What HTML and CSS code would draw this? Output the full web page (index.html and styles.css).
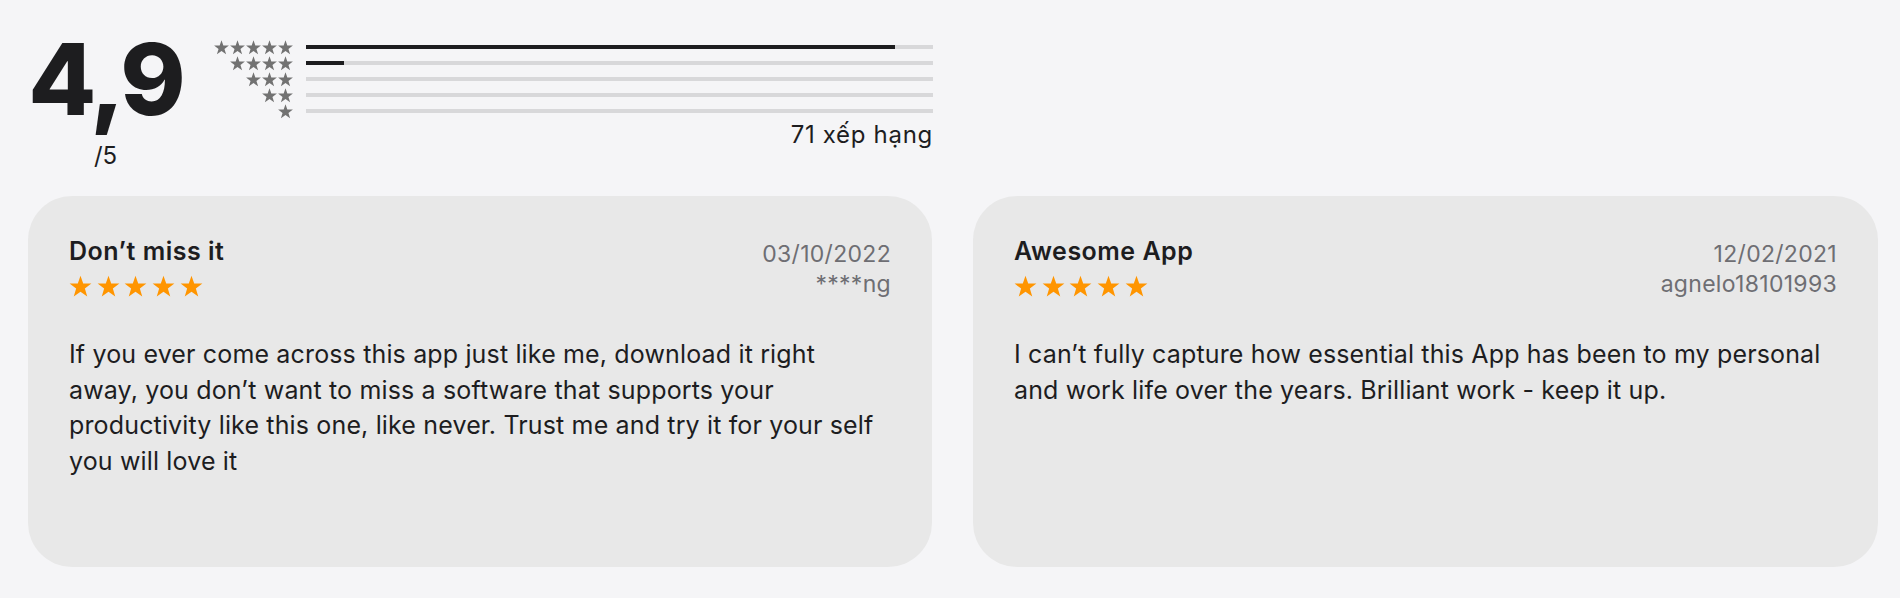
FILE: index.html
```html
<!DOCTYPE html>
<html lang="vi">
<head>
  <meta charset="UTF-8">
  <title>Xếp hạng và đánh giá</title>
  <link rel="stylesheet" href="styles.css">
</head>
<body>
  <svg width="0" height="0" class="defs">
    <symbol id="star" viewBox="0 0 24 24">
      <path d="M12 1.6L14.59 9.04L22.46 9.2L16.18 13.96L18.47 21.5L12 17L5.53 21.5L7.82 13.96L1.54 9.2L9.41 9.04Z"/>
    </symbol>
  </svg>

  <main class="ratings">
    <section class="summary">
      <div class="score">
        <span class="score-value">4,9</span>
        <span class="score-max">/5</span>
      </div>

      <div class="histogram">
        <div class="hist-row">
          <div class="hist-stars">
            <svg><use href="#star"/></svg><svg><use href="#star"/></svg><svg><use href="#star"/></svg><svg><use href="#star"/></svg><svg><use href="#star"/></svg>
          </div>
          <div class="bar"><div class="bar-fill" style="width: 94%"></div></div>
        </div>
        <div class="hist-row">
          <div class="hist-stars">
            <svg><use href="#star"/></svg><svg><use href="#star"/></svg><svg><use href="#star"/></svg><svg><use href="#star"/></svg>
          </div>
          <div class="bar"><div class="bar-fill" style="width: 6%"></div></div>
        </div>
        <div class="hist-row">
          <div class="hist-stars">
            <svg><use href="#star"/></svg><svg><use href="#star"/></svg><svg><use href="#star"/></svg>
          </div>
          <div class="bar"></div>
        </div>
        <div class="hist-row">
          <div class="hist-stars">
            <svg><use href="#star"/></svg><svg><use href="#star"/></svg>
          </div>
          <div class="bar"></div>
        </div>
        <div class="hist-row">
          <div class="hist-stars">
            <svg><use href="#star"/></svg>
          </div>
          <div class="bar"></div>
        </div>
        <div class="count">71 xếp hạng</div>
      </div>
    </section>

    <section class="reviews">
      <article class="review">
        <div class="review-head">
          <div>
            <h3 class="review-title">Don’t miss it</h3>
            <div class="review-stars">
              <svg><use href="#star"/></svg><svg><use href="#star"/></svg><svg><use href="#star"/></svg><svg><use href="#star"/></svg><svg><use href="#star"/></svg>
            </div>
          </div>
          <div class="review-meta">
            <time>03/10/2022</time>
            <span>****ng</span>
          </div>
        </div>
        <p class="review-body">If you ever come across this app just like me, download it right away, you don’t want to miss a software that supports your productivity like this one, like never. Trust me and try it for your self you will love it</p>
      </article>

      <article class="review">
        <div class="review-head">
          <div>
            <h3 class="review-title">Awesome App</h3>
            <div class="review-stars">
              <svg><use href="#star"/></svg><svg><use href="#star"/></svg><svg><use href="#star"/></svg><svg><use href="#star"/></svg><svg><use href="#star"/></svg>
            </div>
          </div>
          <div class="review-meta">
            <time>12/02/2021</time>
            <span>agnelo18101993</span>
          </div>
        </div>
        <p class="review-body">I can’t fully capture how essential this App has been to my personal and work life over the years. Brilliant work - keep it up.</p>
      </article>
    </section>
  </main>
</body>
</html>
```

FILE: styles.css
```css
body {
  margin: 0;
  background-color: #f5f5f7;
  color: #1d1d1f;
  font-family: Inter, "Noto Sans", sans-serif;
}
.defs {
  position: absolute;
}
.ratings {
  padding: 39px 28px 0 28px;
}
.summary {
  display: flex;
  align-items: flex-start;
  width: 905px;
}
.score {
  display: flex;
  flex-direction: column;
  align-items: center;
  width: 155px;
}
.score-value {
  font-size: 99px;
  font-weight: 800;
  line-height: 80px;
  letter-spacing: -3px;
}
.score-max {
  font-size: 24px;
  line-height: 30px;
  margin-top: 22px;
}
.histogram {
  flex: 1;
  margin-left: 31px;
}
.hist-row {
  display: flex;
  align-items: center;
  height: 16px;
}
.hist-stars {
  display: flex;
  justify-content: flex-end;
  width: 80px;
  fill: #727272;
}
.hist-stars svg {
  width: 17px;
  height: 17px;
  margin-left: -1px;
}
.bar {
  flex: 1;
  height: 4px;
  margin-left: 12px;
  background-color: #d8d8da;
}
.bar-fill {
  height: 100%;
  background-color: #1d1d1f;
}
.count {
  text-align: right;
  font-size: 24px;
  line-height: 30px;
  letter-spacing: 0.7px;
  margin-top: 1px;
}
.reviews {
  display: grid;
  grid-template-columns: 904px 905px;
  gap: 41px;
  margin-top: 25px;
}
.review {
  box-sizing: border-box;
  min-height: 371px;
  padding: 40px 41px;
  border-radius: 44px;
  background-color: #e8e8e8;
}
.review-head {
  display: flex;
  justify-content: space-between;
  align-items: flex-start;
}
.review-title {
  margin: 0;
  font-size: 25px;
  font-weight: 600;
  line-height: 30px;
  letter-spacing: 0.5px;
}
.review-stars {
  display: flex;
  gap: 2.7px;
  margin-top: 8px;
  margin-left: -1px;
  fill: #ff9500;
}
.review-stars svg {
  width: 25px;
  height: 25px;
}
.review-meta {
  display: flex;
  flex-direction: column;
  align-items: flex-end;
  padding-top: 3px;
  font-size: 23px;
  line-height: 30px;
  letter-spacing: 0.3px;
  color: #6e6e73;
}
.review-body {
  margin: 38px 0 0 0;
  font-size: 25px;
  line-height: 35.7px;
  letter-spacing: 0.15px;
}
```
